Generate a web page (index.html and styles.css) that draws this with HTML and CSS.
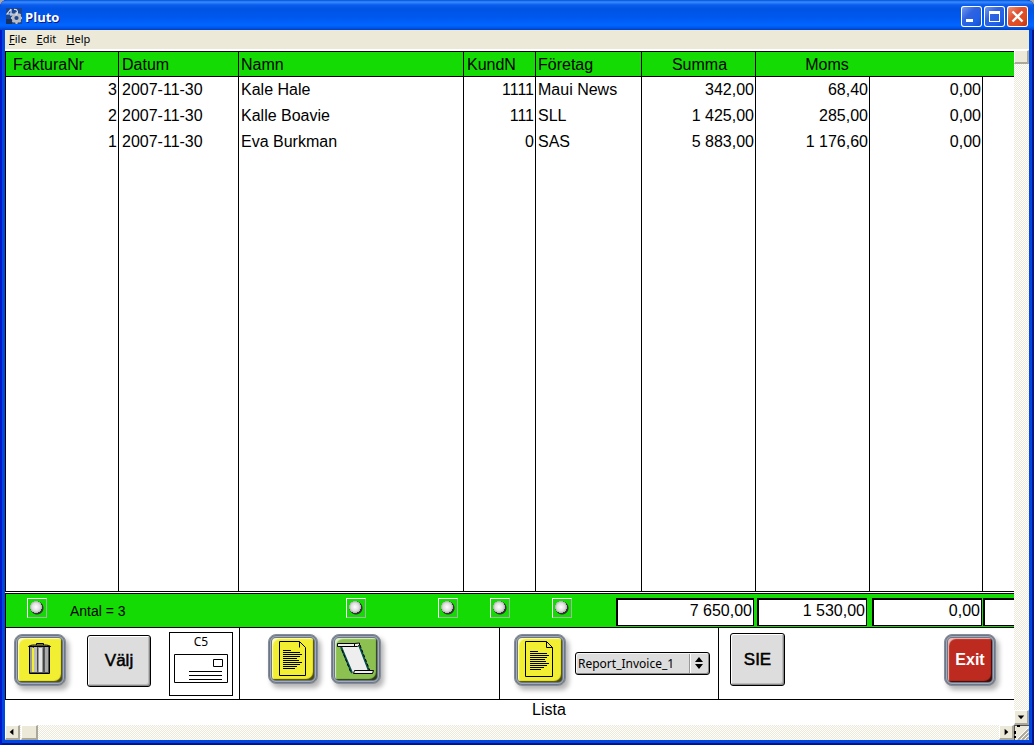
FILE: index.html
```html
<!DOCTYPE html>
<html lang="sv">
<head>
<meta charset="utf-8">
<title>Pluto</title>
<link rel="stylesheet" href="styles.css">
</head>
<body>
<div class="window">
  <header class="titlebar">
    <svg class="app-icon" viewBox="0 0 16 16" aria-hidden="true">
      <rect width="16" height="16" fill="#1d4690"/>
      <path d="M0 11h6v5H0z" fill="#15305f"/>
      <circle cx="10.500" cy="10" r="3.500" fill="none" stroke="#b9bcc4" stroke-width="2.800"/>
      <path d="M10.500 4v2M10.500 14v2M5 10h2M14 10h2M6.500 6l1.500 1.500M13 12.500l1.500 1.500M6.500 14l1.500-1.500M13 7.500L14.500 6" stroke="#b9bcc4" stroke-width="2"/>
      <path d="M5 1L1 6h6M5 1v7M8 1.500c4-.5 4.500 3.500 1.500 5.500" fill="none" stroke="#d3e1f5" stroke-width="1.200"/>
    </svg>
    <h1 class="title">Pluto</h1>
    <div class="window-controls">
      <button class="win-btn" aria-label="Minimize"><svg viewBox="0 0 21 21"><path d="M5 13h7v3H5z" fill="#fff"/></svg></button>
      <button class="win-btn" aria-label="Maximize"><svg viewBox="0 0 21 21"><path d="M5 5h11v11H5z M6 8v7h9V8z" fill="#fff" fill-rule="evenodd"/></svg></button>
      <button class="win-btn win-close" aria-label="Close"><svg viewBox="0 0 21 21"><path d="M5.500 5.500l10 10M15.500 5.500l-10 10" stroke="#fff" stroke-width="2.400"/></svg></button>
    </div>
  </header>
  <nav class="menubar">
    <button class="menu"><u>F</u>ile</button>
    <button class="menu"><u>E</u>dit</button>
    <button class="menu"><u>H</u>elp</button>
  </nav>
  <div class="workspace">
    <main class="content">
      <div class="list">
        <table class="invoices">
          <colgroup><col class="c-nr"><col class="c-date"><col class="c-name"><col class="c-cust"><col class="c-company"><col class="c-sum"><col class="c-sum"><col class="c-extra"><col></colgroup>
          <thead>
            <tr><th class="first">FakturaNr</th><th>Datum</th><th>Namn</th><th>KundN</th><th>Företag</th><th class="mid">Summa</th><th class="mid open moms">Moms</th><th class="open"></th><th></th></tr>
          </thead>
          <tbody>
            <tr><td class="num">3</td><td>2007-11-30</td><td>Kale Hale</td><td class="num">1111</td><td>Maui News</td><td class="num">342,00</td><td class="num">68,40</td><td class="num">0,00</td><td></td></tr>
            <tr><td class="num">2</td><td>2007-11-30</td><td>Kalle Boavie</td><td class="num">111</td><td>SLL</td><td class="num">1 425,00</td><td class="num">285,00</td><td class="num">0,00</td><td></td></tr>
            <tr><td class="num">1</td><td>2007-11-30</td><td>Eva Burkman</td><td class="num">0</td><td>SAS</td><td class="num">5 883,00</td><td class="num">1 176,60</td><td class="num">0,00</td><td></td></tr>
            <tr class="filler"><td></td><td></td><td></td><td></td><td></td><td></td><td></td><td></td><td></td></tr>
          </tbody>
        </table>
      </div>
      <section class="summary">
        <input type="radio" name="sort" class="sort" aria-label="FakturaNr">
        <span class="count">Antal = 3</span>
        <input type="radio" name="sort" class="sort" aria-label="Namn">
        <input type="radio" name="sort" class="sort" aria-label="Datum">
        <input type="radio" name="sort" class="sort" aria-label="KundN">
        <input type="radio" name="sort" class="sort" aria-label="Företag">
        <input type="text" class="total total-wide" value="7 650,00" aria-label="Summa" readonly>
        <input type="text" class="total" value="1 530,00" aria-label="Moms" readonly>
        <input type="text" class="total" value="0,00" aria-label="Total" readonly>
        <input type="text" class="total total-rest" value="" aria-label="Rest" readonly>
      </section>
      <section class="toolbar">
        <div class="group group-edit">
          <button class="tile yellow" aria-label="Radera">
            <svg viewBox="0 0 52 52">
              <path d="M15 13h20v26H16z" fill="#555"/>
              <path d="M16 13h3v25h-3z" fill="#999"/><path d="M18 14h3v24h-3z" fill="#f2ee32"/>
              <path d="M20 13h3v25h-3z" fill="#bbb"/><path d="M24 13h5v25h-5z" fill="#999"/><path d="M25 14h3v24h-3z" fill="#e4e4e4"/><path d="M31 13h3v25h-3z" fill="#aaa"/>
              <path d="M14.500 12.500c1-1 3-1.500 6-1.500h10c3 0 5 .500 6 1.500z" fill="#999" stroke="#000"/>
              <path d="M22.500 11V9.500h7V11" fill="none" stroke="#000"/>
              <path d="M15.500 13v26.500h20V13" fill="none" stroke="#000"/>
              <path d="M23.500 15v21M29.500 15v21" stroke="#444"/>
            </svg>
          </button>
          <button class="plain select-btn">Välj</button>
          <button class="envelope"><span>C5</span>
            <svg viewBox="0 0 54 29" aria-hidden="true"><path d="M.5.500h53v28H.5zM39.500 5.500h9v7h-9zM15 17.500h33M15 21.500h33M15 25.500h33" fill="none" stroke="#000"/></svg>
          </button>
        </div>
        <div class="group group-print">
          <button class="tile yellow small" aria-label="Rapport">
            <svg viewBox="0 0 50 50"><path d="M11.500 7.500h20l6 6v28h-26zM31.500 7.500v6" fill="none" stroke="#000"/><path d="M15 16.500h8M15 18.500h17M15 20.500h19M15 22.500h17M15 24.500h14M15 26.500h16M15 28.500h19M15 30.500h17M15 32.500h14M15 34.500h12" stroke="#000"/></svg>
          </button>
          <button class="tile green small" aria-label="Lista">
            <svg viewBox="0 0 50 50"><path d="M11 12.500h17l10 26H20z" fill="#eee"/><path d="M10 13l11 26M28 11l10 26" fill="none" stroke="#07504e" stroke-width="2"/><path d="M11 16l9 23M29 11l10 26" fill="none" stroke="#000" stroke-dasharray="3 2"/><path d="M6.500 9.500h17v3h-17zM23.500 9.500l5-.5v2l-2 1.500h-3zM23.500 36.500h19l-1 3h-19z" fill="#eee" stroke="#000"/></svg>
          </button>
        </div>
        <div class="group group-report">
          <button class="tile yellow" aria-label="Skriv rapport">
            <svg viewBox="0 0 52 52"><path d="M11.500 7.500h21l6 6v29h-27zM32.500 7.500v6h6" fill="none" stroke="#000"/><path d="M16 17.500h8M16 19.500h17M16 21.500h19M16 23.500h17M16 25.500h15M16 27.500h16M16 29.500h19M16 31.500h17M16 33.500h14M16 35.500h11" stroke="#000"/></svg>
          </button>
          <div class="picker">
            <select aria-label="Rapport"><option>Report_Invoice_1</option></select>
            <svg viewBox="0 0 20 21" aria-hidden="true"><path d="M.5 1v19" stroke="#999"/><path d="M1.500 1v19" stroke="#fff"/><path d="M6 9l4-5 4 5zM6 11l4 5 4-5z"/></svg>
          </div>
        </div>
        <div class="group group-end">
          <button class="plain sie-btn">SIE</button>
          <button class="tile red">Exit</button>
        </div>
      </section>
      <footer class="status">Lista</footer>
    </main>
    <div class="vscroll">
      <button class="thumb v-thumb" aria-label="Scroll"></button>
      <button class="thumb v-arrow" aria-label="Down"><svg viewBox="0 0 13 13"><path d="M3 5h7L6.500 9z"/></svg></button>
    </div>
    <div class="hscroll">
      <button class="thumb h-arrow" aria-label="Left"><svg viewBox="0 0 13 13"><path d="M8 3v7L4 6.500z"/></svg></button>
      <button class="thumb h-thumb" aria-label="Scroll"></button>
      <button class="thumb h-arrow h-right" aria-label="Right"><svg viewBox="0 0 13 13"><path d="M5 3v7l4-3.500z"/></svg></button>
    </div>
    <div class="grip"><svg viewBox="0 0 15 15" aria-hidden="true"><path d="M4 15L15 4M8 15l7-7M12 15l3-3" stroke="#aca899" stroke-width="2"/><path d="M3 14L14 3M7 14l7-7M11 14l3-3" stroke="#fff"/><path d="M0 .5h15M.5 0v15" stroke="#555"/><path d="M3 1h3M1 6v3M1 11v2" stroke="#000" stroke-width="2"/></svg></div>
  </div>
</div>
</body>
</html>
```
FILE: styles.css
```css
* { box-sizing: border-box; }

body {
  margin: 0;
  background: #a9a9a9;
  color: #000;
  font-family: "Liberation Sans", Arial, sans-serif;
  font-size: 16px;
}

button, input, select { font: inherit; color: inherit; margin: 0; padding: 0; border: 0; border-radius: 0; background: none; }
button svg { display: block; width: 100%; height: 100%; }

.window {
  display: flex;
  flex-direction: column;
  height: 100vh;
  padding: 0 5px 5px;
  border-radius: 7px 7px 0 0;
  overflow: hidden;
  background: #0046e0;
  box-shadow: inset 2px 0 #0019c8, inset -2px 0 #00138c, inset 0 -2px #00138c;
}

.titlebar {
  display: flex;
  align-items: center;
  height: 30px;
  margin: 0 -5px;
  padding: 2px 6px 0;
  background: linear-gradient(#0050d8 0, #3a8cff 2px, #0a5cec 5px, #0054e3 9px, #0058f0 18px, #0066ff 25px, #005cf5 27px, #0040c0 30px);
}
.app-icon { width: 16px; height: 16px; }
.title {
  flex: 1;
  margin: 0 0 0 3px;
  padding-top: 2px;
  color: #fff;
  font: bold 13px/18px "Open Sans", sans-serif;
  text-shadow: 1px 1px #0a1883;
}
.window-controls { display: flex; gap: 2px; }
.win-btn {
  width: 21px;
  height: 21px;
  border-radius: 3px;
  box-shadow: inset 0 0 0 1px #fff;
  background: linear-gradient(135deg, #7ba2f0, #2f63e0 40%, #2060e8 70%, #1248c0);
}
.win-close { background: linear-gradient(135deg, #f0a080, #e05030 40%, #e04c20 70%, #b83010); }

.menubar {
  display: flex;
  gap: 10px;
  height: 20px;
  padding-left: 4px;
  background: #ece9d8;
  border-bottom: 1px solid #fff;
}
.menu { padding-bottom: 2px; font: 11px/16px "Noto Sans", sans-serif; }

.workspace {
  flex: 1;
  min-height: 0;
  display: grid;
  grid-template: minmax(0, 1fr) 15px / minmax(0, 1fr) 15px;
}

.content {
  display: flex;
  flex-direction: column;
  background: #fff;
  padding-top: 1px;
  overflow: hidden;
}

.list {
  flex: 1;
  min-height: 0;
  border: solid #000;
  border-width: 1px 0 1px 1px;
}
.invoices {
  width: 100%;
  height: 100%;
  table-layout: fixed;
  border-collapse: separate;
  border-spacing: 0;
}
.c-nr { width: 113px; }
.c-date { width: 120px; }
.c-name { width: 225px; }
.c-cust { width: 72px; }
.c-company { width: 106px; }
.c-sum { width: 114px; }
.c-extra { width: 113px; }
th, td {
  height: 26px;
  padding: 0 0 0 2px;
  border-right: 1px solid #000;
  line-height: 24px;
  font-weight: normal;
  text-align: left;
  white-space: nowrap;
}
th {
  height: 25px;
  padding-top: 1px;
  line-height: 23px;
  background: #14db03;
  border-bottom: 1px solid #000;
}
th.first { padding-left: 7px; }
th.mid { text-align: center; }
th.moms { padding-right: 2px; padding-left: 30px; }
th.open { border-right: 0; }
th:last-child, td:last-child { border-right: 0; }
th:nth-child(2), td:nth-child(2), th:nth-child(4) { padding-left: 3px; }
.num { padding: 0 1px 0 0; text-align: right; }
.filler td { height: auto; }

.summary {
  display: grid;
  grid-template-columns: 43px 276px 92px 52px 62px 64px 141px 115px 111px minmax(0, 1fr);
  height: 35px;
  margin-top: 1px;
  padding: 4px 0 0 21px;
  background: #14db03;
  border: solid #000;
  border-width: 1px 0 1px 1px;
}
.sort {
  appearance: none;
  width: 20px;
  height: 20px;
  border: 1px solid;
  border-color: #fff #a5b5a5 #a5b5a5 #fff;
  background: radial-gradient(circle at 8px 8px, #fff 0, #ddd 4px, #aaa 6px, transparent 6px), radial-gradient(circle at 9px 9px, #333 6px, transparent 7px);
}
.count { font-size: 14px; line-height: 26px; }
.total {
  width: 110px;
  height: 28px;
  padding: 0 1px 4px 0;
  background: #fff;
  border: solid #000;
  border-width: 2px 1px 1px 2px;
  text-align: right;
}
.total-wide { width: 138px; }
.total-rest { width: 100%; border-right: 0; }

.toolbar {
  display: flex;
  border: solid #000;
  border-width: 0 0 1px 1px;
}
.group {
  display: flex;
  align-items: flex-start;
  height: 71px;
  padding-top: 6px;
  border-right: 1px solid #000;
}
.group-edit { width: 234px; padding-left: 8px; }
.group-print { width: 260px; padding-left: 28px; gap: 13px; }
.group-report { width: 219px; padding-left: 14px; gap: 9px; }
.group-end { flex: 1; padding: 5px 18px 0 11px; justify-content: space-between; border-right: 0; }

.tile {
  width: 52px;
  height: 52px;
  border-radius: 8px;
  border: 1px solid #858d9a;
  box-shadow: inset 0 0 0 1px #6c7686, inset 0 0 0 2px #a3abb8, inset 0 0 0 3px #6c7686, inset 4px 4px 1px #ffffffb0, inset -4px -4px 1px #000000b0, 3px 4px 5px #0000004c;
}
.tile svg { margin: -1px; width: calc(100% + 2px); height: calc(100% + 2px); }
.small { width: 50px; height: 50px; }
.yellow { background: #f2ee32; }
.green { background: #8cc152; }
.red { margin-top: 1px; background: #bc2a20; color: #fff; font-weight: bold; }

.plain {
  background: #ddd;
  border: 1px solid #000;
  border-radius: 3px;
  box-shadow: inset 1px 1px #fff, inset -1px -1px #888, inset -2px -2px #bbb;
  font-size: 17px;
  -webkit-text-stroke: 0.5px #000;
}
.select-btn { width: 64px; height: 52px; margin: 1px 18px 0 21px; }
.sie-btn { width: 55px; height: 53px; }

.envelope {
  display: flex;
  flex-direction: column;
  align-items: center;
  gap: 3px;
  width: 64px;
  height: 64px;
  margin-top: -2px;
  border: 1px solid #000;
}
.envelope span { font: 12px/18px "Noto Sans", sans-serif; }
.envelope svg { width: 54px; height: 29px; }

.picker { position: relative; margin-top: 18px; }
.picker select {
  appearance: none;
  display: block;
  width: 135px;
  height: 23px;
  padding-left: 2px;
  border: 1px solid #000;
  border-radius: 3px;
  background: #ddd;
  box-shadow: inset 1px 1px #f4f4f4, inset -1px -1px #888;
  font: 12px/18px "Noto Sans", sans-serif;
}
.picker svg { position: absolute; right: 1px; top: 1px; width: 20px; height: 21px; pointer-events: none; }

.status { height: 25px; padding-left: 79px; line-height: 20px; text-align: center; }

.vscroll, .hscroll {
  display: flex;
  background: repeating-conic-gradient(#ece9d8 0 25%, #fff 0 50%) 0 0 / 2px 2px;
}
.vscroll { flex-direction: column; justify-content: space-between; }
.thumb {
  background: #ece9d8;
  border: solid;
  border-width: 1px 2px 2px 1px;
  border-color: #fff #aca899 #aca899 #fff;
}
.v-thumb { height: 14px; }
.v-arrow { height: 15px; }
.h-arrow { width: 15px; }
.h-thumb { width: 17px; margin-left: 1px; }
.h-right { margin-left: auto; }
.grip { background: #ece9d8; }
.grip svg { display: block; width: 15px; height: 15px; }
```
